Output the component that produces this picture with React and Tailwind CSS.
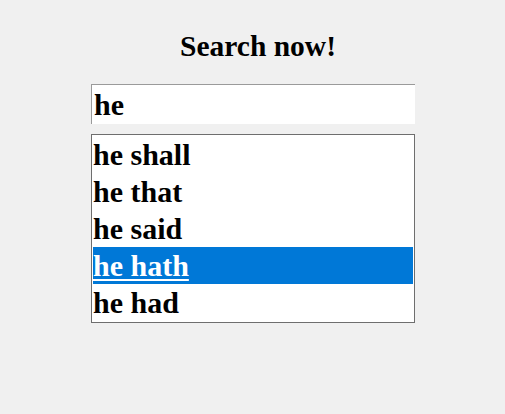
export default function App() {
  const items = ["he shall", "he that", "he said", "he hath", "he had"];
  return (
    <div className="min-h-screen bg-[#f0f0f0] text-black" style={{ fontFamily: '"Liberation Serif", "Times New Roman", serif' }}>
      <div className="flex flex-col items-center pt-[28px] pl-px">
        <h2 className="text-[29.5px] leading-[36px] font-bold pl-[10px]">Search now!</h2>
        <div className="mt-[20px] w-[324px] h-[40px] bg-white border-t border-l border-t-[#9a9a9a] border-l-[#9a9a9a] px-[2px] flex items-center">
          <span className="text-[30px] font-bold leading-[37px]">he</span>
        </div>
        <div className="mt-[10px] w-[324px] bg-white border border-[#6e6e6e] p-px flex flex-col">
          {items.map((it, i) => (
            <div
              key={it}
              className={
                i === 3
                  ? "h-[37px] leading-[37px] text-[30px] font-bold bg-[#0078d7] text-white underline decoration-2 underline-offset-[3px]"
                  : "h-[37px] leading-[37px] text-[30px] font-bold"
              }
            >
              {it}
            </div>
          ))}
        </div>
      </div>
    </div>
  );
}
